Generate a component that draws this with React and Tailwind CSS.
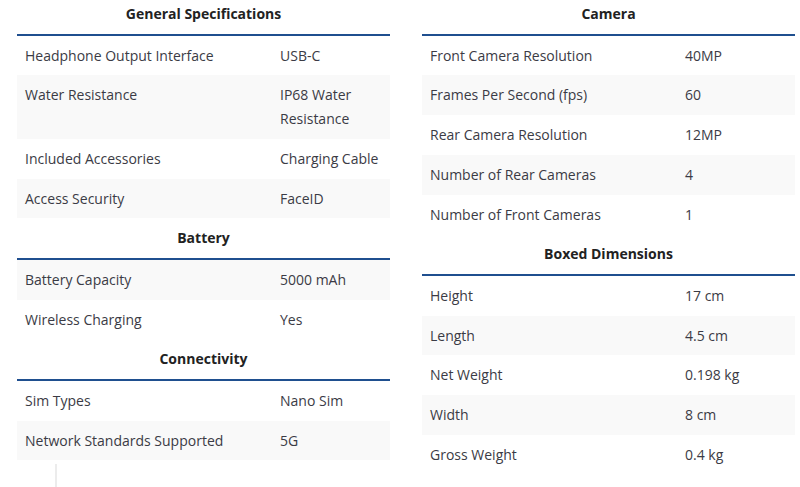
import React from 'react';

const left = [
  { title: 'General Specifications', rows: [
    ['Headphone Output Interface', 'USB-C'],
    ['Water Resistance', 'IP68 Water Resistance'],
    ['Included Accessories', 'Charging Cable'],
    ['Access Security', 'FaceID'],
  ] },
  { title: 'Battery', rows: [
    ['Battery Capacity', '5000 mAh'],
    ['Wireless Charging', 'Yes'],
  ] },
  { title: 'Connectivity', rows: [
    ['Sim Types', 'Nano Sim'],
    ['Network Standards Supported', '5G'],
  ] },
];

const right = [
  { title: 'Camera', rows: [
    ['Front Camera Resolution', '40MP'],
    ['Frames Per Second (fps)', '60'],
    ['Rear Camera Resolution', '12MP'],
    ['Number of Rear Cameras', '4'],
    ['Number of Front Cameras', '1'],
  ] },
  { title: 'Boxed Dimensions', rows: [
    ['Height', '17 cm'],
    ['Length', '4.5 cm'],
    ['Net Weight', '0.198 kg'],
    ['Width', '8 cm'],
    ['Gross Weight', '0.4 kg'],
  ] },
];

// striping counts header rows too, like one big table
function SpecTable({ groups }) {
  let n = 0;
  return (
    <div className="w-[373px] flex flex-col">
      {groups.map((g) => {
        n++;
        return (
          <div key={g.title}>
            <div className="py-2 leading-[23.7px] text-center font-bold text-[#222] border-b-2 border-[#1f4f8f]">
              {g.title}
            </div>
            {g.rows.map(([k, v]) => {
              n++;
              const striped = n % 2 === 1;
              return (
                <div key={k} className={`flex py-2 leading-[23.7px] ${striped ? 'bg-[#f9f9f9]' : 'bg-white'}`}>
                  <div className="w-[255px] px-2 text-[#3b3b45]">{k}</div>
                  <div className="w-[118px] px-2 text-[#3b3b45]">{v}</div>
                </div>
              );
            })}
          </div>
        );
      })}
    </div>
  );
}

export default function App() {
  return (
    <div className="w-[800px] h-[487px] overflow-hidden bg-white text-[14px]" style={{ fontFamily: '"Open Sans", "Liberation Sans", sans-serif' }}>
      <div className="-mt-[6px] flex pl-[17px] gap-[32px]">
        <div className="flex flex-col">
          <SpecTable groups={left} />
          <div className="ml-[38px] mt-[4px] w-[2px] h-[24px] bg-[#ececec]" />
        </div>
        <SpecTable groups={right} />
      </div>
    </div>
  );
}
